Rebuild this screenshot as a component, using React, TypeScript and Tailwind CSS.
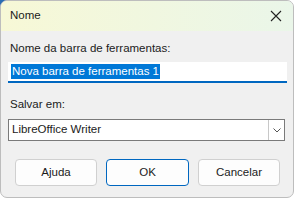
import React from "react";

export default function App() {
  return (
    <div className="w-[295px] h-[201px] bg-white relative overflow-hidden" style={{ fontFamily: '"Liberation Sans", Arial, sans-serif' }}>
      <div className="absolute left-0 top-0 w-[10px] h-[10px] bg-[#2a6db4]" />
      <div className="relative w-[294px] h-[198px] rounded-[7px] border border-[#bdbdbd] bg-[#f0f0f0] overflow-hidden flex flex-col text-[11.5px] text-[#1b1b1b]">
        <div className="h-[30px] shrink-0 flex items-center justify-between pl-[9px] pr-[8px] bg-gradient-to-r from-[#f7f8d6] to-[#eaf6e9]">
          <span>Nome</span>
          <svg width="12" height="12" viewBox="0 0 12 12" className="mr-[3px]">
            <path d="M1 1 L11 11 M11 1 L1 11" stroke="#222" strokeWidth="1.1" />
          </svg>
        </div>
        <div className="flex flex-col px-[7px] pt-[9px]">
          <div className="pl-[2px] leading-[16px]">Nome da barra de ferramentas:</div>
          <div className="mt-[6px] h-[21px] w-[279px] bg-white border-b-2 border-[#0067c0] flex items-center pl-[3px]">
            <span className="bg-[#0078d7] text-white leading-[15px] px-[1px]">Nova barra de ferramentas 1</span>
          </div>
          <div className="mt-[13px] pl-[2px] leading-[16px]">Salvar em:</div>
          <div className="mt-[7px] h-[22px] w-[277px] bg-white border border-[#7a7a7a] flex items-center justify-between">
            <span className="pl-[3px]">LibreOffice Writer</span>
            <div className="h-[20px] w-[16px] border-l border-[#c8c8c8] flex items-center justify-center">
              <svg width="8" height="5" viewBox="0 0 8 5">
                <path d="M0.5 0.5 L4 4 L7.5 0.5" stroke="#555" strokeWidth="1" fill="none" />
              </svg>
            </div>
          </div>
          <div className="mt-[18px] flex pl-[7px] gap-[9px]">
            <button className="w-[82px] h-[27px] bg-[#fdfdfd] border border-[#d0d0d0] rounded-[4px]">Ajuda</button>
            <button className="w-[83px] h-[27px] bg-[#fdfdfd] border border-[#0067c0] rounded-[4px]">OK</button>
            <button className="w-[82px] h-[27px] bg-[#fdfdfd] border border-[#d0d0d0] rounded-[4px]">Cancelar</button>
          </div>
        </div>
      </div>
    </div>
  );
}
